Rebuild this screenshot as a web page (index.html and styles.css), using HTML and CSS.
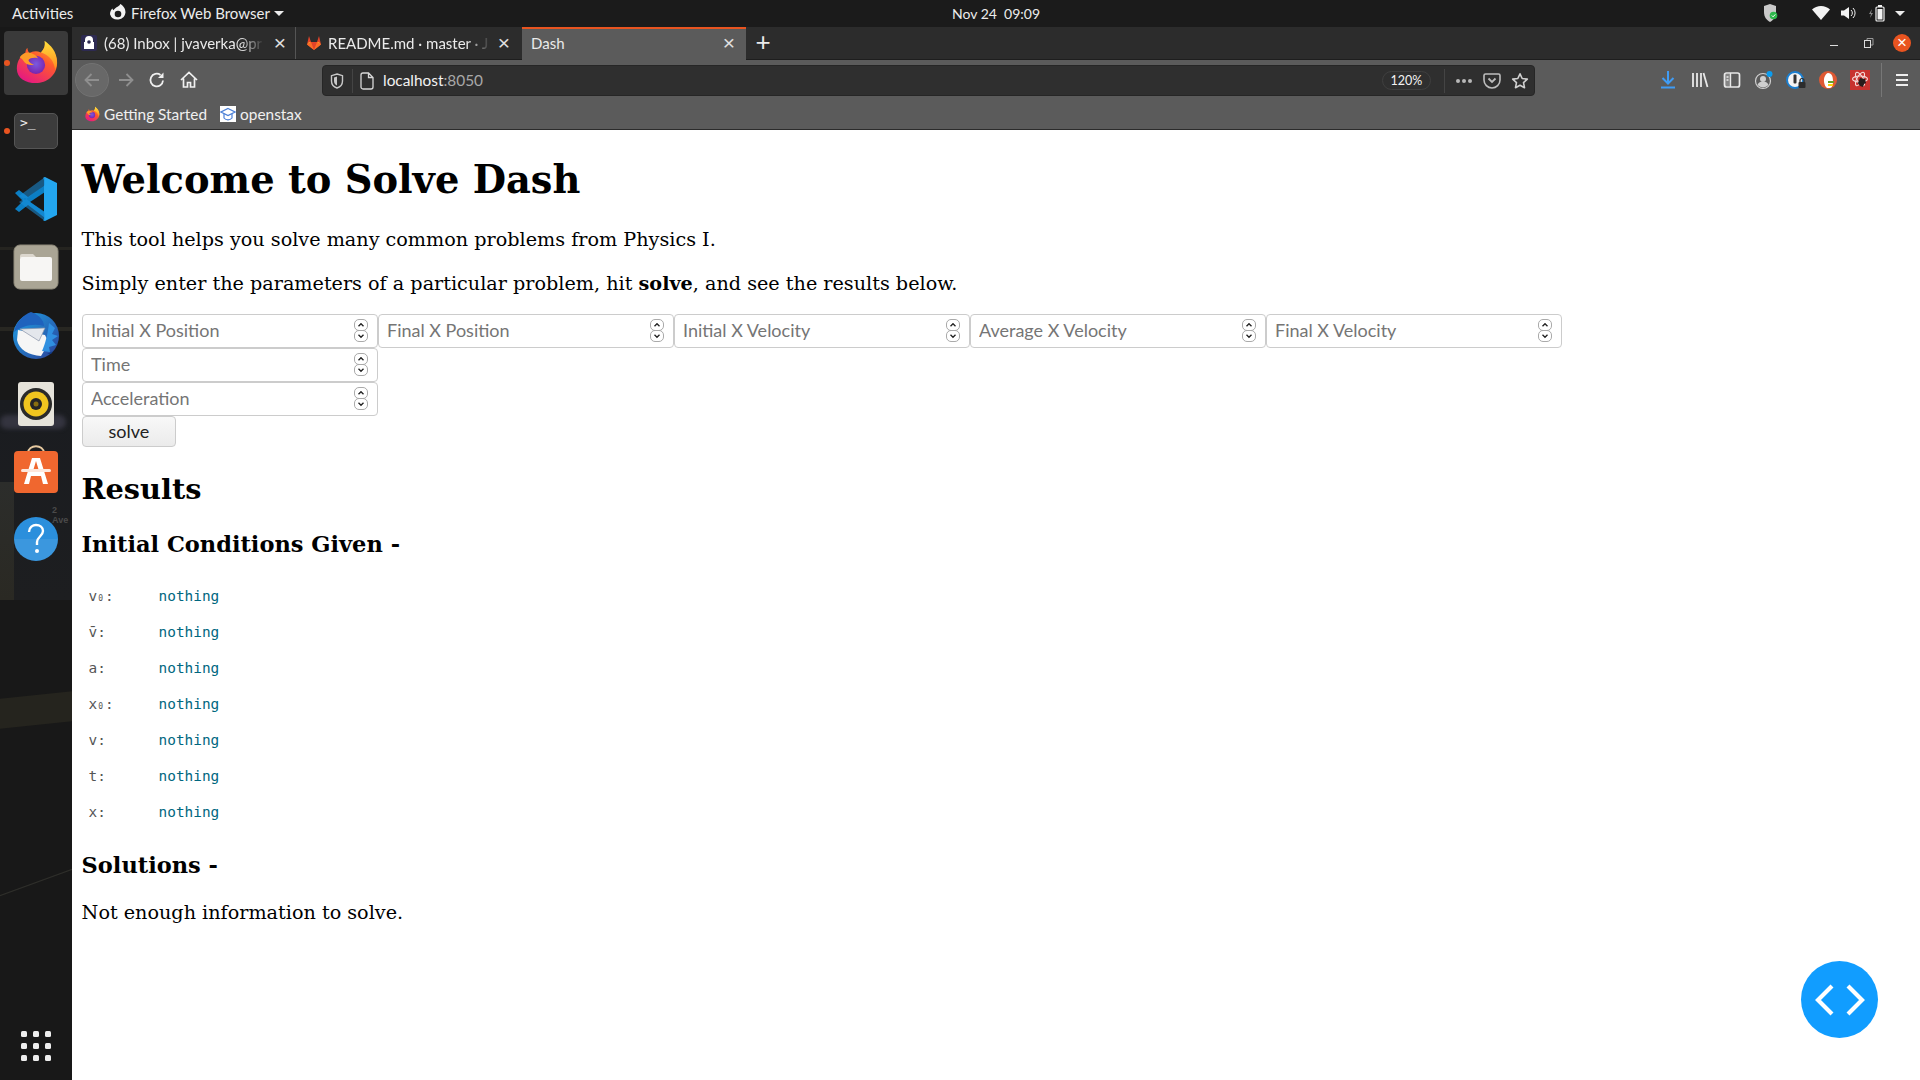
FILE: index.html
```html
<!DOCTYPE html>
<html lang="en">
<head>
<meta charset="utf-8">
<title>Dash</title>
<link rel="stylesheet" href="styles.css">
</head>
<body>
<svg class="defs" width="0" height="0" aria-hidden="true">
  <defs>
    <linearGradient id="ffBody" x1="0.8" y1="0" x2="0.2" y2="1"><stop offset="0" stop-color="#ffbd2e"/><stop offset="0.4" stop-color="#ff5a2c"/><stop offset="1" stop-color="#e31587"/></linearGradient>
    <linearGradient id="ffFlame" x1="0.5" y1="0" x2="0.5" y2="1"><stop offset="0" stop-color="#ffe03c"/><stop offset="1" stop-color="#ff8a1f"/></linearGradient>
    <radialGradient id="ffGlobe" cx="0.5" cy="0.45" r="0.6"><stop offset="0" stop-color="#7a5ae0"/><stop offset="1" stop-color="#7a1fa8"/></radialGradient>
    <linearGradient id="tb" x1="0" y1="0" x2="1" y2="1"><stop offset="0" stop-color="#1fa3e8"/><stop offset="1" stop-color="#2b3f96"/></linearGradient>
    <symbol id="firefox" viewBox="0 0 48 48">
      <path fill="url(#ffBody)" d="M33 2c1 6-1 9-4 12-5-2-9-1-12 1-1-2-2-4-2-6-1 1-2 3-2 5-4 3-9 8-9 17 0 10 9 15 20 15s22-8 22-21c0-9-6-16-13-23z"/>
      <path fill="url(#ffFlame)" d="M33 2c6 4 13 11 13 22 0 3-1 6-2 8-1-8-5-14-12-17-2-1-3-1-3-1 3-3 5-6 4-12z"/>
      <circle cx="24" cy="27" r="9.500" fill="url(#ffGlobe)"/>
      <path fill="#ff9b28" d="M7 19c3-4 8-6 13-4 3 1 5 3 6 5-5-1-8 0-10 2 1 3 3 4 6 5-5 1-9-1-11-4-1-2-3-3-4-4z"/>
    </symbol>
    <symbol id="chev" viewBox="0 0 12 8"><path d="M3 5.500l3-3 3 3" fill="none" stroke="#222" stroke-width="1.600"/></symbol>
  </defs>
</svg>

<header class="topbar">
  <span class="tb-activities">Activities</span>
  <svg class="tb-fflogo" width="18" height="18" viewBox="0 0 18 18"><path fill="#f2f2f2" d="M9 2.500c1.400-.9 2.200-1.600 2.100-2.400 2.900 1.500 5.400 4.300 5.400 8.400A8 8 0 0 1 1 10.200c0-2.300 1-4.300 2.500-5.600.1.700.4 1.200.9 1.600C5.400 4.700 7 3.600 9 2.500z"/><circle cx="9" cy="10" r="3.300" fill="#1c1c1c"/></svg>
  <span class="tb-app">Firefox Web Browser</span>
  <span class="caret tb-caret"></span>
  <span class="tb-clock">Nov 24&nbsp; 09:09</span>
  <div class="tb-tray">
    <svg class="tray-shield" width="14" height="18" viewBox="0 0 14 18"><path fill="#c9c9c9" d="M6 0l6 2v6c0 5-2.500 8-6 10C2.500 16 0 13 0 8V2z"/><circle cx="9.500" cy="11.500" r="3.800" fill="#2eb84c"/><path d="M7.800 11.500l1.300 1.300 2.200-2.400" stroke="#fff" stroke-width="1" fill="none"/></svg>
    <svg class="tray-wifi" width="18" height="14" viewBox="0 0 18 14"><path fill="#f2f2f2" d="M0 3.500C2.500 1.200 5.500 0 9 0s6.500 1.200 9 3.500L9 14z"/></svg>
    <svg class="tray-vol" width="16" height="14" viewBox="0 0 16 14"><path fill="#f2f2f2" d="M0 4.500h3L8 1v12L3 9.500H0z"/><path d="M10 4a4 4 0 0 1 0 6M12 2a7 7 0 0 1 0 10" stroke="#f2f2f2" fill="none" stroke-width="1"/></svg>
    <svg class="tray-bat" width="16" height="18" viewBox="0 0 16 18"><path fill="#888" d="M3 5L0 10h2l-1 4 3-5H2z"/><rect x="7" y="3" width="8" height="14" rx="1" fill="none" stroke="#f2f2f2" stroke-width="1.200"/><rect x="9" y="1" width="4" height="2" fill="#f2f2f2"/><rect x="8.500" y="5" width="5" height="10.500" fill="#f2f2f2"/></svg>
    <span class="caret"></span>
  </div>
</header>

<div class="desktop">
  <nav class="dock">
    <div class="wall wall-a"></div>
    <div class="wall wall-b"></div>
    <div class="wall wall-c"></div>
    <div class="wall wall-d"></div>
    <div class="wall wall-e"></div>
    <div class="wall wall-f"></div>
    <div class="wall wall-g"></div>
    <span class="wall wall-sign">2<br>Ave</span>
    <div class="dock-item dock-active"><span class="run-dot"></span>
      <svg width="46" height="48" viewBox="0 0 48 48"><use href="#firefox"/></svg>
    </div>
    <div class="dock-item dock-term"><span class="run-dot"></span>
      <div class="term-icon">&gt;_</div>
    </div>
    <div class="dock-item dock-code">
      <svg width="44" height="44" viewBox="0 0 44 44"><path fill="#0b7ec4" d="M1 16l4-3 9 7 17-12v7L16 25l15 10v6L14 28l-9 7-4-3 8-8z"/><path fill="#23a6ef" d="M31 0l12 6v32l-12 6c-2 0-2-1-1-2V3c-1-2-1-3 1-3z"/><path fill="#1a8fdd" d="M31 8L11 23l-6-4 26-19zM31 36L11 21l-6 4 26 19z" opacity="0.55"/></svg>
    </div>
    <div class="dock-item dock-files">
      <svg width="46" height="46" viewBox="0 0 46 46"><rect x="1" y="1" width="44" height="44" rx="6" fill="#aaa595" stroke="#8f8a7b"/><path fill="#dcd7ce" d="M7 12a2 2 0 0 1 2-2h11l4 4H7z"/><rect x="7" y="13" width="32" height="24" rx="2" fill="#f7f6f4"/></svg>
    </div>
    <div class="dock-item dock-tb">
      <svg width="50" height="50" viewBox="0 0 50 50"><circle cx="25" cy="26" r="23" fill="url(#tb)"/><path fill="#1f62bd" d="M3 22c2-10 9-17 17-20 7 2 13 8 13 14-10-3-22 0-30 6z"/><path fill="#f6f6f6" d="M7 20l27 5 4 8-8 13C18 45 8 40 6 30z"/><path fill="#e4e7ec" stroke="#8a93a8" stroke-width="0.700" d="M9 19l25-1-6 13z"/><path fill="#2f8fe0" d="M38 13l6 5-3 6 6 2-6 4 4 5-7 2 1 5-8-1c3-6 6-18 7-28z"/><path fill="#123b86" d="M36 44l6-3-2 3z"/></svg>
    </div>
    <div class="dock-item dock-rb">
      <svg width="38" height="46" viewBox="0 0 38 46"><rect x="1" y="1" width="36" height="44" rx="3" fill="#e6e3da"/><circle cx="19" cy="23" r="16" fill="#2a2a2a"/><circle cx="19" cy="23" r="12.500" fill="#f0c51f"/><circle cx="19" cy="23" r="6" fill="#252525"/><circle cx="19" cy="23" r="2.500" fill="#8a6f10"/></svg>
    </div>
    <div class="dock-item dock-sw">
      <svg width="46" height="50" viewBox="0 0 46 50"><path d="M15 9c0-9 16-9 16 0" fill="none" stroke="#e6c9a0" stroke-width="1.800"/><rect x="1" y="7" width="44" height="42" rx="4" fill="#f0672f"/><path fill="#fff" d="M19 14h8l8 26h-5l-2-8H18l-2 8h-5zM20 27h6l-3-10z"/><rect x="8" y="25" width="30" height="3" rx="1.500" fill="#fde7dc"/></svg>
    </div>
    <div class="dock-item dock-help">
      <svg width="46" height="46" viewBox="0 0 46 46"><circle cx="23" cy="23" r="22" fill="#2b8fdc"/><path fill="#fff" fill-opacity="0.08" d="M1 23h44a22 22 0 0 1-44 0z"/><path d="M16 16c0-5 4-7 7-7 4 0 7 2.500 7 6 0 5-6 6-6 11v3" fill="none" stroke="#fff" stroke-width="2.400"/><circle cx="24" cy="35" r="2" fill="#fff"/></svg>
    </div>
    <div class="dock-grid">
      <i></i><i></i><i></i><i></i><i></i><i></i><i></i><i></i><i></i>
    </div>
  </nav>

  <div class="window">
    <div class="tabstrip">
      <div class="tab tab-one">
        <svg class="tab-ico" width="16" height="16" viewBox="0 0 16 16"><rect width="16" height="16" rx="2" fill="#2d2a52"/><path fill="#fff" d="M4 7V5a4 4 0 0 1 8 0v2h1v7H3V7z"/><circle cx="8" cy="7" r="1.800" fill="#2d2a52"/></svg>
        <span class="tab-title">(68) Inbox | jvaverka@pr</span>
        <span class="tab-x">×</span>
      </div>
      <div class="tab tab-two">
        <svg class="tab-ico" width="16" height="16" viewBox="0 0 16 16"><path fill="#e24329" d="M8 15L1 9.500 3 1l2 6h6l2-6 2 8.500z"/><path fill="#fc6d26" d="M8 15L1 9.500 5 7zM8 15l7-5.500L11 7z"/><path fill="#fca326" d="M1 9.500L3 7h2zM15 9.500L13 7h-2z"/></svg>
        <span class="tab-title">README.md · master · J</span>
        <span class="tab-x">×</span>
      </div>
      <div class="tab tab-active">
        <span class="tab-title">Dash</span>
        <span class="tab-x">×</span>
      </div>
      <span class="tab-new">+</span>
      <div class="winctl">
        <svg class="win-min" width="12" height="12" viewBox="0 0 12 12"><rect x="1" y="8" width="8" height="1" fill="#ddd"/></svg>
        <svg class="win-max" width="12" height="12" viewBox="0 0 12 12"><rect x="1.500" y="3.500" width="6" height="7" fill="none" stroke="#ddd"/><path d="M4 3V1.500h6V8H8" fill="none" stroke="#999"/></svg>
        <span class="win-close">×</span>
      </div>
    </div>

    <div class="toolbar">
      <span class="tool-back">
        <svg width="20" height="20" viewBox="0 0 20 20"><path d="M17 10H4M9.500 4L3.500 10l6 6" fill="none" stroke="#8f8f8f" stroke-width="1.800"/></svg>
      </span>
      <span class="tool-btn">
        <svg width="20" height="20" viewBox="0 0 20 20"><path d="M3 10h13M10.500 4l6 6-6 6" fill="none" stroke="#8f8f8f" stroke-width="1.800"/></svg>
      </span>
      <span class="tool-btn">
        <svg width="20" height="20" viewBox="0 0 20 20"><path d="M16 10.500A6.300 6.300 0 1 1 13.500 5" fill="none" stroke="#f0f0f0" stroke-width="1.800"/><path d="M16.500 2.500V8H11z" fill="#f0f0f0"/></svg>
      </span>
      <span class="tool-btn">
        <svg width="20" height="20" viewBox="0 0 20 20"><path d="M2 10l8-7.500L18 10M4.500 8.500V17h4v-4.500h3V17h4V8.500" fill="none" stroke="#f0f0f0" stroke-width="1.700"/></svg>
      </span>
      <div class="urlbar">
        <svg class="url-shield" width="14" height="16" viewBox="0 0 14 16"><path d="M7 1l5.500 1.700V8c0 3.500-2.500 6-5.500 7-3-1-5.500-3.500-5.500-7V2.700z" fill="none" stroke="#c8c8c8" stroke-width="1.400"/><path d="M7 3.500V12.500C5 11.500 4 10 4 8V4.500z" fill="#c8c8c8"/></svg>
        <span class="url-sep"></span>
        <svg class="url-page" width="14" height="18" viewBox="0 0 14 18"><path d="M3 1h5.500L13 5.500V15a2 2 0 0 1-2 2H3a2 2 0 0 1-2-2V3a2 2 0 0 1 2-2zM8.500 1v4.500H13" fill="none" stroke="#d8d8d8" stroke-width="1.300"/></svg>
        <span class="url-text">localhost<em>:8050</em></span>
        <span class="url-zoom">120%</span>
        <span class="url-sep url-sep-r"></span>
        <span class="url-dots"><i></i><i></i><i></i></span>
        <svg class="url-pocket" width="18" height="16" viewBox="0 0 18 16"><path d="M2.500 1h13A1.500 1.500 0 0 1 17 2.500V7a8 8 0 0 1-16 0V2.500A1.500 1.500 0 0 1 2.500 1z" fill="none" stroke="#bdbdbd" stroke-width="1.600"/><path d="M5.500 5.500L9 9l3.500-3.500" fill="none" stroke="#bdbdbd" stroke-width="1.800"/></svg>
        <svg class="url-star" width="18" height="18" viewBox="0 0 18 18"><path d="M9 1.800l2.200 4.700 5.100.6-3.800 3.500 1 5.100L9 13.200l-4.500 2.500 1-5.100L1.700 7.100l5.100-.6z" fill="none" stroke="#d0d0d0" stroke-width="1.600" stroke-linejoin="round"/></svg>
      </div>
      <div class="tools-right">
        <svg width="20" height="20" viewBox="-1 0 20 20"><path d="M9 1v12M3.500 8L9 13.500 14.500 8" fill="none" stroke="#3f9cf5" stroke-width="2"/><rect x="2" y="16.500" width="14" height="2" fill="#3f9cf5"/></svg>
        <svg width="20" height="20" viewBox="-1 -1 20 20"><path d="M2 2v14M6 2v14M10 2v14M12.500 2l4 14" fill="none" stroke="#e8e8e8" stroke-width="1.800"/></svg>
        <svg width="20" height="20" viewBox="-1 -1 20 20"><rect x="1.500" y="2" width="15" height="14" rx="2" fill="none" stroke="#e8e8e8" stroke-width="1.700"/><rect x="2" y="3" width="5.500" height="12" fill="#e8e8e8" fill-opacity="0.3"/><path d="M7.500 2v14M3.500 6h2M3.500 9h2" stroke="#e8e8e8" stroke-width="1.400"/></svg>
        <svg width="20" height="20" viewBox="0 0 20 20"><circle cx="9" cy="11" r="7.500" fill="none" stroke="#cfcfcf" stroke-width="1.200"/><circle cx="9" cy="9" r="3" fill="#cfcfcf"/><path d="M3.500 15c1-3 3-3.500 5.500-3.500s4.500.5 5.500 3.500a7.500 7.500 0 0 1-11 0z" fill="#cfcfcf"/><circle cx="15.500" cy="4" r="3" fill="#0a9cf0"/></svg>
        <svg width="20" height="20" viewBox="0 0 20 20"><circle cx="9" cy="10" r="8" fill="#f4f4f4" stroke="#1a7fd1" stroke-width="2"/><rect x="7.500" y="4.500" width="3" height="9" rx="1" fill="#333"/><rect x="12.500" y="12" width="7" height="6" rx="1" fill="#2c2c2c"/><path d="M14 12v-1.500a2 2 0 0 1 4 0V12" fill="none" stroke="#2c2c2c" stroke-width="1.200"/></svg>
        <svg width="20" height="20" viewBox="0 0 20 20"><circle cx="10" cy="10" r="9" fill="#de5833"/><path d="M10 3c4 0 5 4 5 8s-1 7-3 7H9C6 16 5 9 7 6c.5-1.500 2-3 3-3z" fill="#fff"/><path d="M10 11h6v2h-6z" fill="#67a12b"/><path d="M10 14h5v2h-5z" fill="#fdd20a"/></svg>
        <svg width="20" height="20" viewBox="0 0 20 20"><rect width="20" height="20" fill="#c8322f"/><g fill="none" stroke="#f4d8d8" stroke-width="1.100"><ellipse cx="10" cy="9" rx="7.500" ry="3"/><ellipse cx="10" cy="9" rx="7.500" ry="3" transform="rotate(60 10 9)"/><ellipse cx="10" cy="9" rx="7.500" ry="3" transform="rotate(120 10 9)"/></g><path d="M10 8l5 1 1 4-2 1-1 3-3-1-2-3z" fill="#2a1b1b"/></svg>
        <span class="tools-sep"></span>
        <span class="burger"><i></i><i></i><i></i></span>
      </div>
    </div>

    <div class="bookmarks">
      <svg class="bm-ff" width="16" height="16" viewBox="0 0 48 48"><use href="#firefox"/></svg>
      <span class="bm-label">Getting Started</span>
      <svg class="bm-os" width="16" height="16" viewBox="0 0 16 16"><rect width="16" height="16" fill="#fff"/><path d="M8 2.500L15 6l-7 3.500L1 6z" fill="none" stroke="#4a7fd6" stroke-width="1.200"/><path d="M4 8v4c2 2.500 6 2.500 8 0V8" fill="none" stroke="#4a7fd6" stroke-width="1.200"/></svg>
      <span class="bm-label">openstax</span>
    </div>

    <main class="page">
      <h1>Welcome to Solve Dash</h1>
      <p>This tool helps you solve many common problems from Physics I.</p>
      <p class="lead-last">Simply enter the parameters of a particular problem, hit <strong>solve</strong>, and see the results below.</p>
      <form class="form">
        <div class="form-row">
          <label class="num"><input type="text" placeholder="Initial X Position"><span class="spin"><svg width="12" height="9"><use href="#chev"/></svg><svg class="down" width="12" height="9"><use href="#chev"/></svg></span></label>
          <label class="num"><input type="text" placeholder="Final X Position"><span class="spin"><svg width="12" height="9"><use href="#chev"/></svg><svg class="down" width="12" height="9"><use href="#chev"/></svg></span></label>
          <label class="num"><input type="text" placeholder="Initial X Velocity"><span class="spin"><svg width="12" height="9"><use href="#chev"/></svg><svg class="down" width="12" height="9"><use href="#chev"/></svg></span></label>
          <label class="num"><input type="text" placeholder="Average X Velocity"><span class="spin"><svg width="12" height="9"><use href="#chev"/></svg><svg class="down" width="12" height="9"><use href="#chev"/></svg></span></label>
          <label class="num"><input type="text" placeholder="Final X Velocity"><span class="spin"><svg width="12" height="9"><use href="#chev"/></svg><svg class="down" width="12" height="9"><use href="#chev"/></svg></span></label>
        </div>
        <div class="form-row">
          <label class="num"><input type="text" placeholder="Time"><span class="spin"><svg width="12" height="9"><use href="#chev"/></svg><svg class="down" width="12" height="9"><use href="#chev"/></svg></span></label>
        </div>
        <div class="form-row">
          <label class="num"><input type="text" placeholder="Acceleration"><span class="spin"><svg width="12" height="9"><use href="#chev"/></svg><svg class="down" width="12" height="9"><use href="#chev"/></svg></span></label>
        </div>
        <button class="solve" type="button">solve</button>
      </form>
      <h2>Results</h2>
      <h3>Initial Conditions Given -</h3>
      <div class="cond">
        <div class="cond-row"><span class="k">v<sub>0</sub>:</span><span class="v">nothing</span></div>
        <div class="cond-row"><span class="k">v̄:</span><span class="v">nothing</span></div>
        <div class="cond-row"><span class="k">a:</span><span class="v">nothing</span></div>
        <div class="cond-row"><span class="k">x<sub>0</sub>:</span><span class="v">nothing</span></div>
        <div class="cond-row"><span class="k">v:</span><span class="v">nothing</span></div>
        <div class="cond-row"><span class="k">t:</span><span class="v">nothing</span></div>
        <div class="cond-row"><span class="k">x:</span><span class="v">nothing</span></div>
      </div>
      <h4>Solutions -</h4>
      <p class="last">Not enough information to solve.</p>
      <button class="fab" type="button" aria-label="Toggle debug">
        <svg width="54" height="32" viewBox="0 0 54 32"><path d="M19 2L5 16l14 14M35 2l14 14-14 14" fill="none" stroke="#fff" stroke-width="4.200"/></svg>
      </button>
    </main>
  </div>
</div>
</body>
</html>
```

FILE: styles.css
```css
* { box-sizing: border-box; }
html, body { margin: 0; height: 100%; overflow: hidden; }
body {
  width: 1920px;
  height: 1080px;
  display: flex;
  flex-direction: column;
  background: #fff;
  font-family: "Lato", "Noto Sans", sans-serif;
}
.defs { position: absolute; }

/* top bar */
.topbar {
  height: 27px;
  flex: none;
  display: flex;
  align-items: center;
  background: #1b1b1b;
  color: #ececec;
  font-size: 15px;
  padding: 0 0 1px 12px;
}
.tb-activities { width: 97px; }
.tb-fflogo { margin-right: 4px; }
.tb-app { width: 143px; white-space: nowrap; }
.caret {
  display: block;
  width: 0; height: 0;
  border-left: 5px solid transparent;
  border-right: 5px solid transparent;
  border-top: 5px solid #ececec;
}
.tb-caret { margin-right: 668px; }
.tb-clock { width: 100px; white-space: nowrap; font-size: 14px; }
.tb-tray {
  margin-left: auto;
  display: flex;
  align-items: center;
  padding-right: 15px;
}
.tray-shield { margin-right: 34px; }
.tray-wifi { margin-right: 11px; }
.tray-vol { margin-right: 12px; }
.tray-bat { margin-right: 10px; }

.desktop { flex: 1; display: flex; min-height: 0; }

/* dock */
.dock {
  position: relative;
  width: 72px;
  flex: none;
  overflow: hidden;
  display: flex;
  flex-direction: column;
  align-items: center;
  background: #181818;
}
.wall { position: absolute; }
.wall-a { left: 0; top: 220px; width: 72px; height: 3px; background: #2b2a24; opacity: .7; }
.wall-b { left: 0; top: 300px; width: 72px; height: 4px; background: #34322a; opacity: .6; }
.wall-c { left: 0; top: 373px; width: 72px; height: 200px; background: linear-gradient(#1a1c20, #1d1e20); }
.wall-d { left: 0; top: 668px; width: 72px; height: 30px; background: #25241e; transform: skewY(-6deg); }
.wall-e { left: 0; top: 855px; width: 72px; height: 1px; background: #2e2e2a; transform: rotate(-20deg) scaleX(1.2); }
.wall-f { left: 0; top: 388px; width: 66px; height: 14px; border-radius: 7px; background: #34343f; filter: blur(2px); }
.wall-g { left: 0; top: 455px; width: 14px; height: 118px; background: linear-gradient(#2c2d2b, #2a2923); }
.wall-sign { left: 52px; top: 478px; color: #4a4a4a; font: bold 9px/10px "Liberation Sans", sans-serif; }
.dock-item { position: relative; display: flex; justify-content: center; align-items: center; width: 64px; }
.dock-active { margin-top: 4px; height: 64px; background: #3a3a3a; border-radius: 4px; }
.dock-active svg { margin-top: -2px; }
.run-dot {
  position: absolute;
  left: 0; top: 50%;
  margin-top: -3px;
  width: 6px; height: 6px;
  border-radius: 50%;
  background: #e95420;
}
.dock-term { margin-top: 18px; height: 36px; }
.term-icon {
  width: 44px;
  height: 36px;
  border-radius: 5px;
  background: #3c3c3c;
  border: 1px solid #555;
  color: #eee;
  font: 13px/16px "DejaVu Sans Mono", monospace;
  padding: 1px 0 0 5px;
}
.dock-code { margin-top: 28px; height: 44px; }
.dock-files { margin-top: 23px; height: 46px; }
.dock-tb { margin-top: 20px; height: 50px; }
.dock-rb { margin-top: 21px; height: 46px; }
.dock-sw { margin-top: 17px; height: 50px; }
.dock-help { margin-top: 22px; height: 46px; }
.dock-grid {
  margin-top: auto;
  margin-bottom: 19px;
  display: grid;
  grid-template-columns: repeat(3, 6px);
  grid-auto-rows: 6px;
  gap: 6px;
  position: relative;
}
.dock-grid i { background: #eee; border-radius: 1.500px; }

/* browser window */
.window { flex: 1; min-width: 0; display: flex; flex-direction: column; }
.tabstrip {
  height: 33px;
  flex: none;
  display: flex;
  align-items: stretch;
  background: #2c2c2c;
  border-bottom: 1px solid #1e1e1e;
  color: #eaeaea;
  font-size: 15px;
}
.tab { display: flex; align-items: center; position: relative; }
.tab-one { width: 224px; padding-left: 9px; border-right: 1px solid #555; }
.tab-one .tab-ico { margin-right: 7px; }
.tab-one .tab-x { margin-right: 8px; margin-left: 9px; }
.tab-two { width: 226px; padding-left: 10px; }
.tab-two .tab-ico { margin-right: 6px; }
.tab-active {
  width: 224px;
  padding-left: 9px;
  padding-bottom: 4px;
  background: #5b5b5b;
  border-top: 2px solid #e95420;
  margin-bottom: -1px;
}
.tab-active .tab-x { margin-right: 10px; }
.tab-ico { flex: none; margin-right: 8px; }
.tab-title {
  flex: 1;
  min-width: 0;
  white-space: nowrap;
  -webkit-mask-image: linear-gradient(to right, #000 85%, transparent 100%);
  mask-image: linear-gradient(to right, #000 85%, transparent 100%);
}
.tab-active .tab-title { -webkit-mask-image: none; mask-image: none; }
.tab-x { flex: none; width: 14px; margin: 0 11px 0 6px; text-align: center; font-size: 21px; line-height: 20px; font-family: "Liberation Sans", sans-serif; color: #e0e0e0; }
.tab-new { width: 34px; text-align: center; font: 300 26px/31px "Liberation Sans", sans-serif; color: #eaeaea; }
.winctl {
  margin-left: auto;
  display: flex;
  align-items: center;
  gap: 22px;
  padding-right: 9px;
}
.win-max { margin-right: -4px; }
.win-close {
  width: 18px; height: 18px;
  border-radius: 50%;
  background: #e95420;
  color: #fff;
  font: 17px/18px "Liberation Sans", sans-serif;
  text-align: center;
}

/* toolbar */
.toolbar {
  height: 43px;
  flex: none;
  display: flex;
  align-items: flex-start;
  padding-top: 3px;
  background: #5b5b5b;
}
.toolbar > span { flex: none; display: flex; align-items: center; justify-content: center; height: 34px; }
.tool-back {
  width: 34px;
  margin-left: 3px;
  border-radius: 50%;
  background: #686868;
  border: 1px solid #727272;
}
.tool-btn { width: 32px; }
.tool-btn:nth-child(2) { margin-left: 2px; width: 30px; }
.urlbar {
  width: 1213px;
  height: 31px;
  margin: 2px 0 0 117px;
  flex: none;
  display: flex;
  align-items: center;
  background: #2f2f2f;
  border: 1px solid #262626;
  border-radius: 4px;
  color: #f2f2f2;
  font-size: 15.4px;
  padding-left: 7px;
}
.url-shield { flex: none; }
.url-sep { width: 1px; height: 24px; background: #444; margin: 0 7px 0 8px; flex: none; }
.url-page { flex: none; margin-right: 9px; }
.url-text { flex: 1; white-space: nowrap; padding-bottom: 2px; }
.url-text em { font-style: normal; color: #a8a8a8; }
.url-zoom {
  width: 49px;
  height: 19px;
  border: 1px solid #3f3f3f;
  border-radius: 10px;
  text-align: center;
  font-size: 12.5px;
  line-height: 17px;
  flex: none;
}
.url-sep-r { margin: 0 11px 0 13px; }
.url-dots { display: flex; gap: 2px; margin-right: 11px; flex: none; }
.url-dots i { width: 4px; height: 4px; border-radius: 50%; background: #b8b8b8; }
.url-pocket { margin-right: 10px; flex: none; }
.url-star { margin-right: 5px; flex: none; }
.tools-right {
  flex: 1;
  height: 34px;
  display: flex;
  align-items: center;
  justify-content: flex-end;
  gap: 12px;
  padding-right: 12px;
}
.tools-right svg { position: relative; left: -1px; }
.tools-sep { width: 1px; height: 34px; background: #777; margin-left: -2px; }
.burger { display: flex; flex-direction: column; gap: 3px; margin-left: 2px; }
.burger i { display: block; width: 12px; height: 2px; background: #eee; }

/* bookmarks */
.bookmarks {
  height: 27px;
  flex: none;
  display: flex;
  align-items: center;
  background: #5b5b5b;
  border-bottom: 1px solid #2b2b2b;
  color: #f0f0f0;
  font-size: 15.4px;
  padding: 0 0 4px 12px;
}
.bm-ff { margin-right: 4px; }
.bm-label { margin-right: 13px; }
.bm-os { margin-right: 4px; }

/* page */
.page {
  position: relative;
  flex: 1;
  background: #fff;
  color: #000;
  padding: 27px 0 0 9.600px;
  font-family: "DejaVu Serif", "Liberation Serif", serif;
  font-size: 19.2px;
}
h1 { margin: 0 0 25px; font-size: 38.4px; line-height: 45px; }
p { margin: 0 0 19px; line-height: 25px; }
.lead-last { margin-bottom: 18px; }
.form { display: flex; flex-direction: column; align-items: flex-start; margin-left: .4px; }
.form-row { display: flex; }
.num {
  width: 296px;
  height: 34px;
  display: flex;
  align-items: center;
  border: 1px solid #ccc;
  border-radius: 4px;
  padding: 0 9px 0 8px;
}
.num input {
  flex: 1;
  min-width: 0;
  border: 0;
  outline: 0;
  padding: 0 0 2px;
  background: transparent;
  font: 18px "Lato", sans-serif;
}
.num input::placeholder { color: #757575; opacity: 1; }
.spin { display: flex; flex-direction: column; flex: none; }
.spin svg { display: block; border: 1px solid #aaa; border-radius: 5px; width: 14px; height: 12px; margin-top: -1px; padding: 1px; }
.spin .down { transform: rotate(180deg); }
.solve {
  width: 94px;
  height: 31px;
  padding: 0 0 2px;
  border: 1px solid #ccc;
  border-radius: 4px;
  background: linear-gradient(#f8f8f8, #ebebeb);
  color: #222;
  font: 18px "Lato", sans-serif;
}
h2 { margin: 25px 0 25px; font-size: 28.8px; line-height: 34px; }
h3 { margin: 0 0 21px; font-size: 22.5px; line-height: 26px; }
.cond { font: 14.4px "DejaVu Sans Mono", monospace; }
.cond-row { display: flex; align-items: center; height: 36px; padding-left: 7px; }
.k { width: 70px; color: #555; white-space: nowrap; }
.k sub { font-size: 8px; vertical-align: baseline; margin: 0 2px 0 1px; }
.v { color: #00677f; }
h4 { margin: 23px 0 23px; font-size: 22.5px; line-height: 24px; }
.last { margin: 0; }
.fab {
  position: absolute;
  right: 42px;
  bottom: 42px;
  width: 77px;
  height: 77px;
  border: 0;
  border-radius: 50%;
  padding: 0;
  background: #119dff;
  display: flex;
  align-items: center;
  justify-content: center;
}
```
